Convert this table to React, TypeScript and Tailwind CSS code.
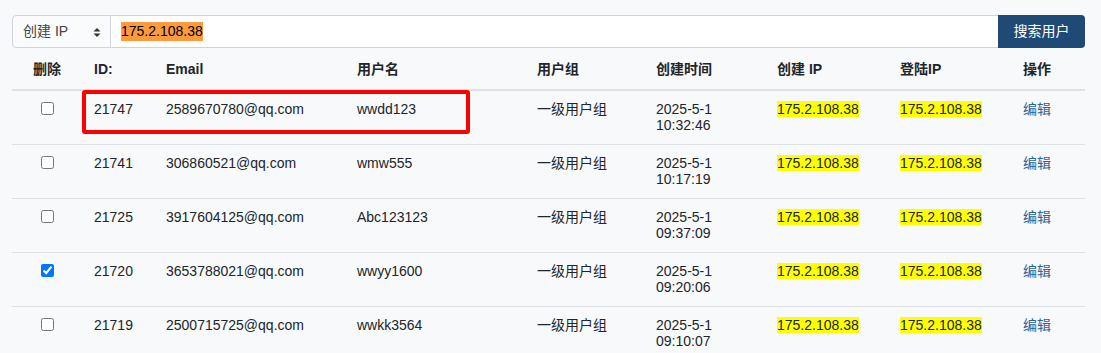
import React from "react";

const rows = [
  { id: "21747", email: "2589670780@qq.com", name: "wwdd123", date: "2025-5-1", time: "10:32:46", checked: false },
  { id: "21741", email: "306860521@qq.com", name: "wmw555", date: "2025-5-1", time: "10:17:19", checked: false },
  { id: "21725", email: "3917604125@qq.com", name: "Abc123123", date: "2025-5-1", time: "09:37:09", checked: false },
  { id: "21720", email: "3653788021@qq.com", name: "wwyy1600", date: "2025-5-1", time: "09:20:06", checked: true },
  { id: "21719", email: "2500715725@qq.com", name: "wwkk3564", date: "2025-5-1", time: "09:10:07", checked: false },
];

export default function App() {
  return (
    <div
      className="relative min-h-[353px] bg-[#f8f9fa] pl-[12px] pr-[16px] pt-[15px] text-[14px] text-[#212529]"
      style={{ fontFamily: '"Liberation Sans", Arial, "Noto Sans CJK SC", sans-serif' }}
    >
      {/* search bar */}
      <div className="flex h-[33px] w-[1073px]">
        <div className="relative flex w-[99px] items-center rounded-l-[4px] border border-[#ced4da] bg-[#fafbfc] pl-[10px] text-[#444]">
          <span>创建 IP</span>
          <svg className="absolute left-[80px] top-[12px]" width="8" height="9" viewBox="0 0 8 9">
            <path d="M0.5 3.5 L4 0 L7.5 3.5 Z" fill="#333" />
            <path d="M0.5 5.5 L4 9 L7.5 5.5 Z" fill="#333" />
          </svg>
        </div>
        <div className="flex flex-1 items-center border-y border-[#ced4da] bg-white pl-[10px]">
          <span className="bg-[#fd9a3c] leading-[19px] text-black">175.2.108.38</span>
        </div>
        <button className="w-[87px] rounded-r-[4px] bg-[#204a76] text-white">搜索用户</button>
      </div>

      {/* table */}
      <table className="w-[1073px] table-fixed border-collapse leading-[16px]">
        <colgroup>
          <col className="w-[70px]" />
          <col className="w-[72px]" />
          <col className="w-[191px]" />
          <col className="w-[180px]" />
          <col className="w-[119px]" />
          <col className="w-[121px]" />
          <col className="w-[123px]" />
          <col className="w-[123px]" />
          <col className="w-[74px]" />
        </colgroup>
        <thead>
          <tr className="border-b-2 border-[#dee2e6] font-bold">
            <th className="px-[12px] pt-[13px] pb-[12px] text-center font-bold">删除</th>
            <th className="px-[12px] pt-[13px] pb-[12px] text-left font-bold">ID:</th>
            <th className="px-[12px] pt-[13px] pb-[12px] text-left font-bold">Email</th>
            <th className="px-[12px] pt-[13px] pb-[12px] text-left font-bold">用户名</th>
            <th className="px-[12px] pt-[13px] pb-[12px] text-left font-bold">用户组</th>
            <th className="px-[12px] pt-[13px] pb-[12px] text-left font-bold">创建时间</th>
            <th className="px-[12px] pt-[13px] pb-[12px] text-left font-bold">创建 IP</th>
            <th className="px-[12px] pt-[13px] pb-[12px] text-left font-bold">登陆IP</th>
            <th className="px-[12px] pt-[13px] pb-[12px] text-left font-bold">操作</th>
          </tr>
        </thead>
        <tbody>
          {rows.map((r) => (
            <tr key={r.id} className="border-b border-[#dee2e6] align-top">
              <td className="px-[12px] pt-[10px] pb-[11px]">
                <input
                  type="checkbox"
                  defaultChecked={r.checked}
                  className="mx-auto mt-[1px] block h-[13px] w-[13px]"
                />
              </td>
              <td className="px-[12px] pt-[10px] pb-[11px]">{r.id}</td>
              <td className="px-[12px] pt-[10px] pb-[11px]">{r.email}</td>
              <td className="px-[12px] pt-[10px] pb-[11px]">{r.name}</td>
              <td className="px-[12px] pt-[10px] pb-[11px]">一级用户组</td>
              <td className="px-[12px] pt-[10px] pb-[11px]">
                <div>{r.date}</div>
                <div>{r.time}</div>
              </td>
              <td className="px-[12px] pt-[10px] pb-[11px]">
                <span className="bg-[#ffff00]">175.2.108.38</span>
              </td>
              <td className="px-[12px] pt-[10px] pb-[11px]">
                <span className="bg-[#ffff00]">175.2.108.38</span>
              </td>
              <td className="px-[12px] pt-[10px] pb-[11px]">
                <a className="text-[#2a6496]">编辑</a>
              </td>
            </tr>
          ))}
        </tbody>
      </table>

      {/* annotation box */}
      <div className="pointer-events-none absolute left-[82px] top-[90px] h-[44px] w-[388px] rounded-[3px] border-4 border-[#ff0000]" />
    </div>
  );
}
